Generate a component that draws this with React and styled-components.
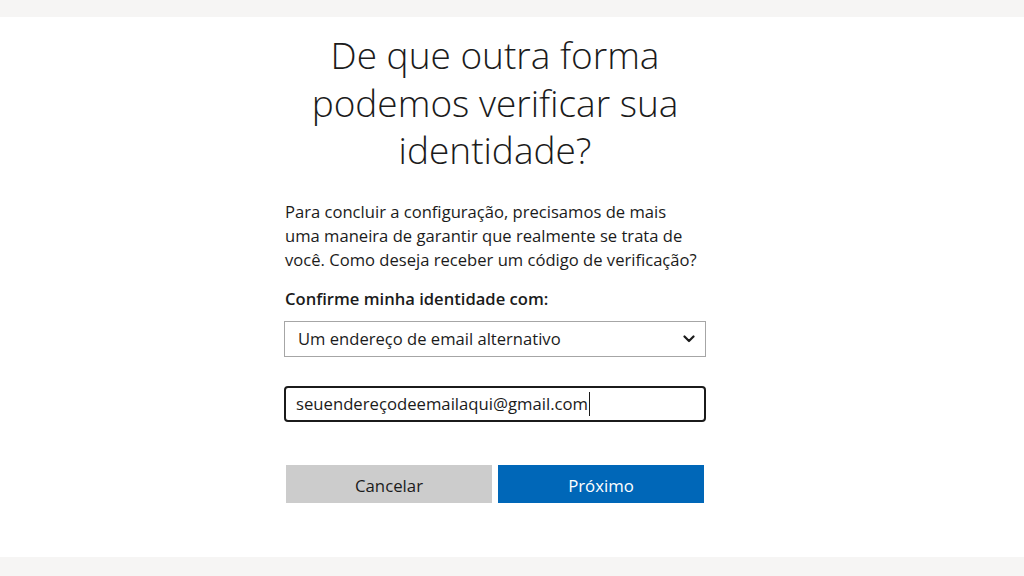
import React from 'react'
import styled, { createGlobalStyle } from 'styled-components'

const GlobalStyle = createGlobalStyle`
  html, body {
    margin: 0;
    padding: 0;
    background: #ffffff;
  }
  body {
    font-family: 'Open Sans', 'Segoe UI', sans-serif;
    color: #1b1b1b;
  }
`;

// Whole screen: grey bands top and bottom, white middle
const Screen = styled.div`
  width: 1024px;
  height: 576px;
  display: flex;
  flex-direction: column;
  background: #f6f5f4;
  overflow: hidden;
`;

const Band = styled.div`
  height: ${props => props.h}px;
  flex-shrink: 0;
  background: #f6f5f4;
`;

const Stage = styled.main`
  flex: 1;
  background: #ffffff;
  display: flex;
  justify-content: flex-start;
  padding-left: 284px;
`;

// The form column
const Column = styled.div`
  width: 422px;
  display: flex;
  flex-direction: column;
`;

const Title = styled.h1`
  margin: 14px -20px 0 -20px;
  font-family: 'Open Sans', sans-serif;
  font-weight: 300;
  font-size: 37px;
  line-height: 47.5px;
  text-align: center;
  color: #1b1b1b;
`;

const Lead = styled.p`
  width: 440px;
  margin: 26px 0 0 1px;
  font-size: 16.6px;
  line-height: 24px;
  white-space: nowrap;
  color: #1b1b1b;
`;

const Label = styled.label`
  display: block;
  margin: 17px 0 0 1px;
  font-size: 16.6px;
  font-weight: 600;
  line-height: 20px;
`;

const SelectBox = styled.div`
  margin-top: 12px;
  height: 36px;
  box-sizing: border-box;
  border: 1px solid #a6a6a6;
  display: flex;
  align-items: center;
  justify-content: space-between;
  padding: 0 10px 0 13px;
  font-size: 16.6px;
`;

const EmailField = styled.div`
  margin-top: 29px;
  height: 36px;
  box-sizing: border-box;
  border: 2px solid #1b1b1b;
  border-radius: 4px;
  display: flex;
  align-items: center;
  padding: 0 10px;
  font-size: 16.7px;
`;

const Caret = styled.span`
  display: inline-block;
  width: 1px;
  height: 24px;
  background: #1b1b1b;
  margin-left: 1px;
`;

const Actions = styled.div`
  margin-top: 43px;
  padding: 0 2px;
  display: grid;
  grid-template-columns: 1fr 1fr;
  gap: 6px;
`;

const Button = styled.button`
  height: 38px;
  padding: 3px 0 0 0;
  border: none;
  font-family: 'Open Sans', sans-serif;
  font-size: 16.8px;
  background: ${props => props.primary ? '#0067b8' : '#cccccc'};
  color: ${props => props.primary ? '#ffffff' : '#1b1b1b'};
`;

const Chevron = () => (
  <svg width="12" height="8" viewBox="0 0 12 8">
    <path d="M1.5 1.5 L6 6 L10.5 1.5" fill="none" stroke="#1b1b1b" strokeWidth="2.2" strokeLinecap="round" strokeLinejoin="round" />
  </svg>
);

const App = () => {
  return (
    <Screen>
      <GlobalStyle />
      <Band h={17} />
      <Stage>
        <Column>
          <Title>De que outra forma podemos verificar sua identidade?</Title>
          <Lead>
            Para concluir a configuração, precisamos de mais<br />
            uma maneira de garantir que realmente se trata de<br />
            você. Como deseja receber um código de verificação?
          </Lead>
          <Label>Confirme minha identidade com:</Label>
          <SelectBox>
            <span>Um endereço de email alternativo</span>
            <Chevron />
          </SelectBox>
          <EmailField>
            seuendereçodeemailaqui@gmail.com<Caret />
          </EmailField>
          <Actions>
            <Button>Cancelar</Button>
            <Button primary>Próximo</Button>
          </Actions>
        </Column>
      </Stage>
      <Band h={19} />
    </Screen>
  );
};

export default App;
